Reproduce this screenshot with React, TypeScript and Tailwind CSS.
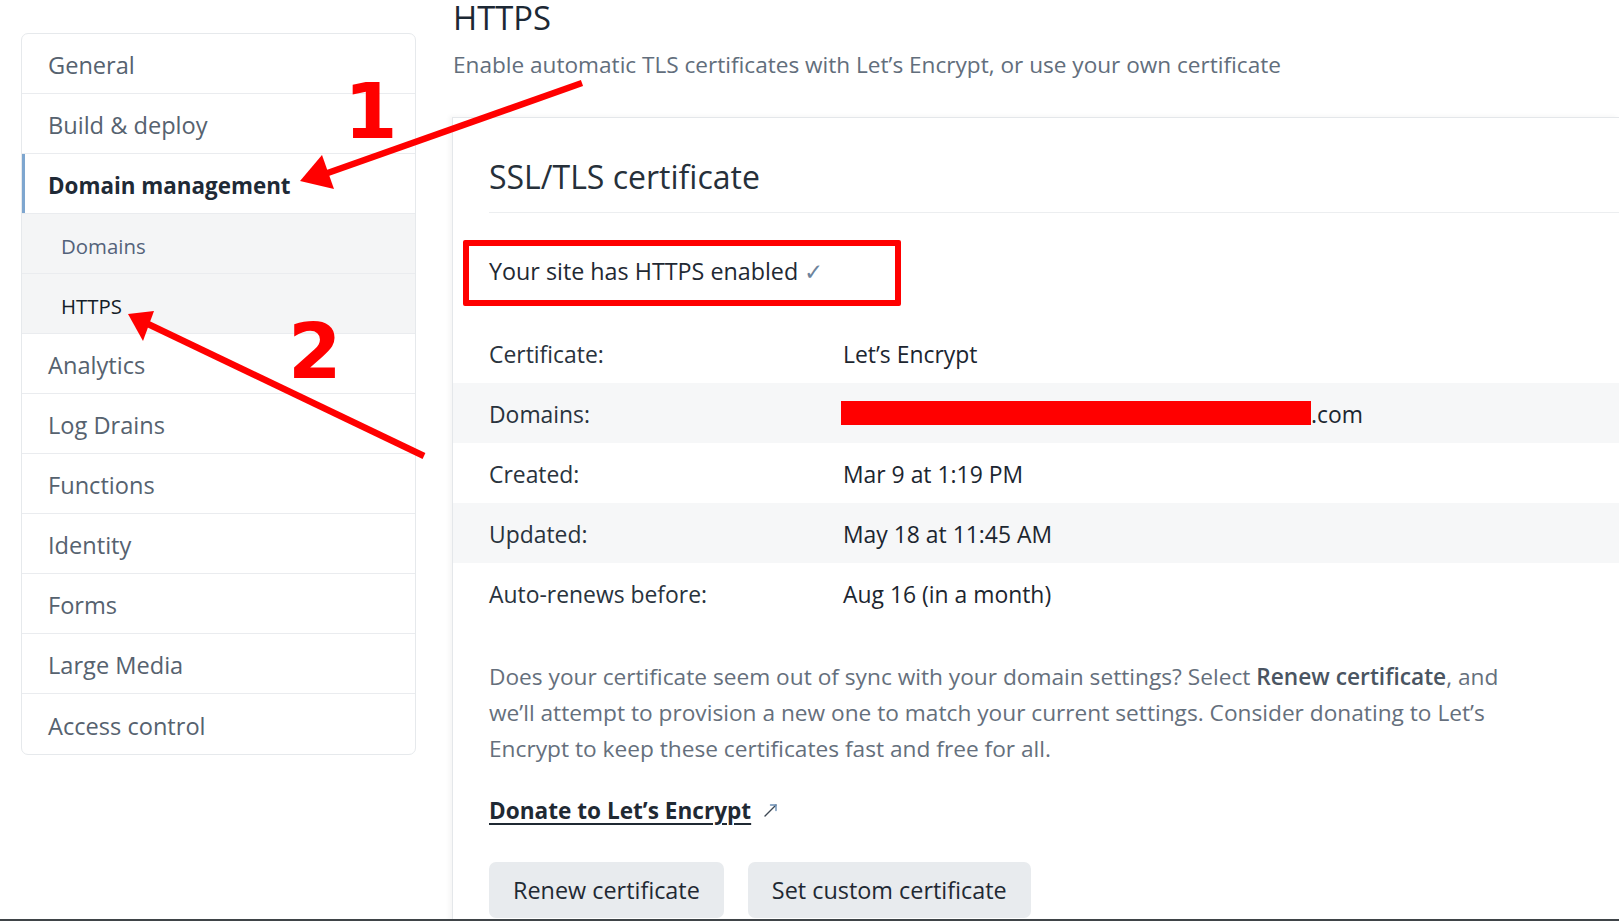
import React from "react";

const navItems: { label: string; kind: "main" | "active" | "sub" | "subActive" }[] = [
  { label: "General", kind: "main" },
  { label: "Build & deploy", kind: "main" },
  { label: "Domain management", kind: "active" },
  { label: "Domains", kind: "sub" },
  { label: "HTTPS", kind: "subActive" },
  { label: "Analytics", kind: "main" },
  { label: "Log Drains", kind: "main" },
  { label: "Functions", kind: "main" },
  { label: "Identity", kind: "main" },
  { label: "Forms", kind: "main" },
  { label: "Large Media", kind: "main" },
  { label: "Access control", kind: "main" },
];

function NavRow({ label, kind, last }: { label: string; kind: string; last: boolean }) {
  const border = last ? "" : "border-b border-[#eaecef]";
  if (kind === "active") {
    return (
      <div className={`relative h-[60px] flex items-center pl-[26px] pt-[5px] ${border}`}>
        <div className="absolute left-0 top-0 bottom-0 w-[3px] bg-[#7ea6cf]" />
        <span className="text-[22.4px] font-bold text-[#1f2a36]">{label}</span>
      </div>
    );
  }
  if (kind === "sub" || kind === "subActive") {
    return (
      <div className={`h-[60px] flex items-center pl-[39px] pt-[5px] bg-[#f4f5f6] ${border}`}>
        <span className={`text-[20.4px] ${kind === "subActive" ? "text-[#141e28]" : "text-[#53627a]"}`}>{label}</span>
      </div>
    );
  }
  return (
    <div className={`h-[60px] flex items-center pl-[26px] pt-[5px] ${border}`}>
      <span className="text-[23.6px] text-[#56626f]">{label}</span>
    </div>
  );
}

function InfoRow({ label, children, striped }: { label: string; children: React.ReactNode; striped?: boolean }) {
  return (
    <div className={`h-[60px] flex items-center pl-[36px] pt-[4px] ${striped ? "bg-[#f6f7f8]" : ""}`}>
      <div className="w-[354px] shrink-0 text-[22.9px] text-[#29333d]">{label}</div>
      <div className="text-[22.9px] font-medium text-[#1c2630] whitespace-nowrap flex items-center">{children}</div>
    </div>
  );
}

export default function App() {
  return (
    <div className="relative w-[1619px] h-[921px] overflow-hidden bg-white font-['Open_Sans','Noto_Sans',sans-serif]">
      <div className="flex h-[919px] overflow-hidden">
        {/* Sidebar */}
        <aside className="w-[416px] shrink-0 pl-[21px] pt-[33px]">
          <nav className="w-[395px] border border-[#e6e9ec] rounded-[7px] overflow-hidden bg-white">
            {navItems.map((it, i) => (
              <NavRow key={it.label} label={it.label} kind={it.kind} last={i === navItems.length - 1} />
            ))}
          </nav>
        </aside>

        {/* Main */}
        <main className="flex-1 min-w-0 pl-[37px]">
          <h1 className="text-[32.8px] leading-[36px] text-[#1c2834]">HTTPS</h1>
          <p className="mt-[12px] text-[22.6px] leading-[34px] text-[#626e7c]">
            Enable automatic TLS certificates with Let’s Encrypt, or use your own certificate
          </p>

          <section className="mt-[35px] ml-[-1px] border-t border-l border-[#e4e7ea] shadow-[-3px_-1px_4px_rgba(0,0,0,0.04)] pt-[39px] h-[900px]">
            <div className="ml-[36px] pb-[15px] border-b border-[#eceef0]">
              <h2 className="text-[32px] leading-[40px] text-[#26303a]">SSL/TLS certificate</h2>
            </div>

            <div className="relative ml-[36px] mt-[41px]">
              <p className="text-[23.3px] leading-[34px] text-[#1f2933]">
                Your site has HTTPS enabled <span className="text-[#6d849c]">✓</span>
              </p>
              <div className="absolute left-[-26px] top-[-14px] w-[438px] h-[66px] border-[6px] border-[#ff0000] rounded-[2px]" />
            </div>

            <div className="mt-[35px]">
              <InfoRow label="Certificate:">Let’s Encrypt</InfoRow>
              <InfoRow label="Domains:" striped>
                <span className="inline-block w-[470px] h-[24px] bg-[#ff0000] ml-[-2px] mt-[-3px]" />
                <span className="font-normal">.com</span>
              </InfoRow>
              <InfoRow label="Created:">Mar 9 at 1:19 PM</InfoRow>
              <InfoRow label="Updated:" striped>May 18 at 11:45 AM</InfoRow>
              <InfoRow label="Auto-renews before:">Aug 16 (in a month)</InfoRow>
            </div>

            <p className="ml-[36px] mt-[36px] max-w-[1040px] text-[22.7px] leading-[36px] text-[#656f7c]">
              Does your certificate seem out of sync with your domain settings? Select{" "}
              <strong className="font-semibold text-[#4a5562]">Renew certificate</strong>, and we’ll attempt to provision a new one to
              match your current settings. Consider donating to Let’s Encrypt to keep these certificates fast and free for all.
            </p>

            <div className="ml-[36px] mt-[26px] h-[36px] flex items-center">
              <a className="text-[22.6px] leading-[36px] font-bold text-[#1f2933] underline underline-offset-[4px] decoration-[2px]">
                Donate to Let’s Encrypt
              </a>
              <svg className="ml-[12px] mt-[-2px]" width="16" height="16" viewBox="0 0 16 16" fill="none">
                <path d="M2 14 L13 3" stroke="#3d4753" strokeWidth="1.4" strokeLinecap="round" />
                <path d="M7.5 3 H13 V8.5" stroke="#6b8fb5" strokeWidth="1.4" strokeLinecap="round" strokeLinejoin="round" />
              </svg>
            </div>

            <div className="ml-[36px] mt-[33px] flex gap-[24px]">
              <button className="h-[56px] px-[24px] pt-[2px] rounded-[7px] bg-[#e8ebee] text-[23.4px] text-[#1f2933]">
                Renew certificate
              </button>
              <button className="h-[56px] px-[24px] pt-[2px] rounded-[7px] bg-[#e8ebee] text-[23.4px] text-[#1f2933]">
                Set custom certificate
              </button>
            </div>
          </section>
        </main>
      </div>
      <div className="h-[2px] bg-[#3f4448]" />

      {/* Annotation overlay */}
      <svg className="absolute inset-0 pointer-events-none" width="1619" height="921" viewBox="0 0 1619 921">
        <line x1="582" y1="83" x2="322" y2="175" stroke="#ff0000" strokeWidth="6.5" />
        <polygon points="300,181 322,155 334,189" fill="#ff0000" />
        <line x1="424" y1="456" x2="148" y2="324" stroke="#ff0000" strokeWidth="6.5" />
        <polygon points="128,314 154,311 143,341" fill="#ff0000" />
        <text x="344" y="138" fontFamily="DejaVu Sans, sans-serif" fontWeight="bold" fontSize="77" fill="#ff0000">1</text>
        <text x="288" y="378" fontFamily="DejaVu Sans, sans-serif" fontWeight="bold" fontSize="77" fill="#ff0000">2</text>
      </svg>
    </div>
  );
}
